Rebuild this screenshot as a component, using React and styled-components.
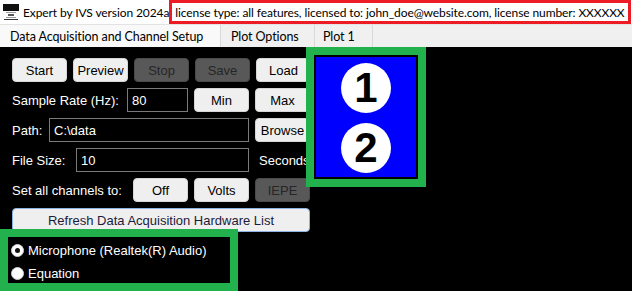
import React from 'react'
import styled, { createGlobalStyle } from 'styled-components'

const GlobalStyle = createGlobalStyle`
  html, body {
    margin: 0;
    padding: 0;
    background: #000;
  }
`

const UI_FONT = `Lato, "Noto Sans", sans-serif`
const APP_FONT = `"Liberation Sans", Arial, sans-serif`

const Window = styled.div`
  position: relative;
  width: 632px;
  height: 291px;
  overflow: hidden;
  background: #000;
  display: flex;
  flex-direction: column;
`

const TitleBar = styled.div`
  height: 24px;
  flex: none;
  background: #fff;
  display: flex;
  align-items: center;
  padding-left: 3px;
  font-family: ${UI_FONT};
  font-size: 12px;
  letter-spacing: -0.1px;
  color: #000;
  white-space: nowrap;
`

const AppIcon = styled.svg`
  width: 16px;
  height: 16px;
  flex: none;
  margin-right: 4px;
`

const LicenseBox = styled.div`
  margin-left: auto;
  margin-right: 1px;
  width: 466px;
  height: 24px;
  box-sizing: border-box;
  border: 3px solid #ed1c24;
  display: flex;
  align-items: center;
  padding: 0 3px;
  overflow: hidden;
`

const TabBar = styled.div`
  height: 22px;
  flex: none;
  display: flex;
  background: #f0f0f0;
  border-top: 1px solid #e3e3e3;
  font-family: ${UI_FONT};
  font-size: 12.5px;
  letter-spacing: -0.1px;
  color: #000;
`

const Tab = styled.div`
  width: ${p => p.$w}px;
  box-sizing: border-box;
  padding-left: ${p => p.$pad}px;
  display: flex;
  align-items: center;
  background: ${p => (p.$active ? '#f9f9f9' : '#f0f0f0')};
  border-right: 1px solid #d9d9d9;
  white-space: nowrap;
`

const Content = styled.div`
  flex: 1;
  display: flex;
  flex-direction: column;
  gap: 6px;
  padding: 11px 0 0 12px;
  font-family: ${APP_FONT};
  font-size: 13px;
  color: #fff;
`

const Row = styled.div`
  display: flex;
  align-items: center;
  height: 24px;
  gap: 6px;
`

const Label = styled.span`
  width: ${p => p.$w}px;
  flex: none;
  white-space: nowrap;
`

const Button = styled.div`
  width: ${p => p.$w || 55}px;
  height: 24px;
  flex: none;
  box-sizing: border-box;
  border-radius: 4px;
  display: flex;
  align-items: center;
  justify-content: center;
  white-space: nowrap;
  overflow: hidden;
  background: ${p => (p.$disabled ? '#585858' : '#efefef')};
  border: 1px solid ${p => (p.$disabled ? '#4a4a4a' : p.$focus ? '#8db2e3' : '#d6d6d6')};
  color: ${p => (p.$disabled ? '#262626' : p.$focus ? '#1c1c3c' : '#000')};
`

const Field = styled.div`
  width: ${p => p.$w}px;
  height: 24px;
  flex: none;
  box-sizing: border-box;
  border: 1px solid #7a7a7a;
  display: flex;
  align-items: center;
  padding-left: 4px;
  color: #fff;
`

const RadioList = styled.div`
  display: flex;
  flex-direction: column;
  margin-top: 1px;
`

const RadioItem = styled.div`
  height: 23px;
  display: flex;
  align-items: center;
  gap: 4px;
  margin-left: -1px;
`

const RadioDot = styled.span`
  width: 13px;
  height: 13px;
  box-sizing: border-box;
  border-radius: 50%;
  background: #fff;
  border: 1px solid #d0d0d0;
  display: flex;
  align-items: center;
  justify-content: center;
  &::after {
    content: '';
    width: 5px;
    height: 5px;
    border-radius: 50%;
    background: ${p => (p.$checked ? '#111' : 'transparent')};
  }
`

const Callout = styled.div`
  position: absolute;
  left: ${p => p.$x}px;
  top: ${p => p.$y}px;
  width: ${p => p.$w}px;
  height: ${p => p.$h}px;
  box-sizing: border-box;
  border: 8px solid #22b14c;
`

const NumberPanel = styled.div`
  height: 100%;
  box-sizing: border-box;
  border: 2px solid #000;
  background: #0000ff;
  display: flex;
  flex-direction: column;
  align-items: center;
  padding-top: 6px;
  gap: 10px;
`

const Badge = styled.div`
  width: 50px;
  height: 50px;
  border-radius: 50%;
  background: #fff;
  color: #000;
  display: flex;
  align-items: center;
  justify-content: center;
  font-family: ${APP_FONT};
  font-weight: bold;
  font-size: 42px;
  line-height: 1;
`

const LogoIcon = () => (
  <AppIcon viewBox="0 0 16 16">
    <rect x="0" y="0" width="16" height="7" fill="#111" />
    <rect x="3" y="8" width="10" height="1" fill="#9a9a9a" />
    <rect x="5" y="10" width="6" height="2" fill="#555" />
    <rect x="3" y="13" width="10" height="1" fill="#9a9a9a" />
    <rect x="1" y="15" width="14" height="1" fill="#333" />
  </AppIcon>
)

export default function App() {
  return (
    <Window>
      <GlobalStyle />
      <TitleBar>
        <LogoIcon />
        <span>Expert by IVS version 2024a</span>
        <LicenseBox>
          license type: all features, licensed to: john_doe@website.com, license number: XXXXXX
        </LicenseBox>
      </TitleBar>

      <TabBar>
        <Tab $w={221} $pad={10} $active>Data Acquisition and Channel Setup</Tab>
        <Tab $w={94} $pad={10}>Plot Options</Tab>
        <Tab $w={58} $pad={8}>Plot 1</Tab>
      </TabBar>

      <Content>
        <Row>
          <Button>Start</Button>
          <Button>Preview</Button>
          <Button $disabled>Stop</Button>
          <Button $disabled>Save</Button>
          <Button>Load</Button>
        </Row>
        <Row>
          <Label $w={109}>Sample Rate (Hz):</Label>
          <Field $w={61}>80</Field>
          <Button>Min</Button>
          <Button>Max</Button>
        </Row>
        <Row>
          <Label $w={31}>Path:</Label>
          <Field $w={200}>C:\data</Field>
          <Button>Browse</Button>
        </Row>
        <Row>
          <Label $w={58}>File Size:</Label>
          <Field $w={173}>10</Field>
          <Label $w={60} style={{ marginLeft: 4 }}>Seconds</Label>
        </Row>
        <Row>
          <Label $w={115}>Set all channels to:</Label>
          <Button>Off</Button>
          <Button>Volts</Button>
          <Button $disabled>IEPE</Button>
        </Row>
        <Row>
          <Button $w={298} $focus>Refresh Data Acquisition Hardware List</Button>
        </Row>
        <RadioList>
          <RadioItem>
            <RadioDot $checked />
            <span>Microphone (Realtek(R) Audio)</span>
          </RadioItem>
          <RadioItem>
            <RadioDot />
            <span>Equation</span>
          </RadioItem>
        </RadioList>
      </Content>

      <Callout $x={306} $y={47} $w={120} $h={140}>
        <NumberPanel>
          <Badge>1</Badge>
          <Badge>2</Badge>
        </NumberPanel>
      </Callout>
      <Callout $x={0} $y={229} $w={238} $h={62} />
    </Window>
  )
}
